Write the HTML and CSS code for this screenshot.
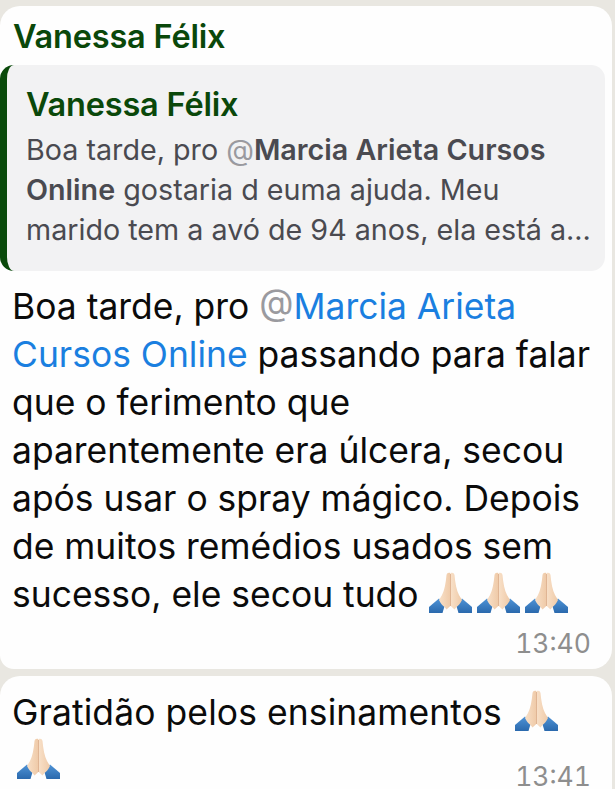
FILE: index.html
```html
<!DOCTYPE html>
<html lang="pt">
<head>
<meta charset="utf-8">
<title>Conversa</title>
<link rel="stylesheet" href="styles.css">
</head>
<body>
<svg class="defs" width="0" height="0" aria-hidden="true">
  <defs>
    <linearGradient id="skin" x1="0" y1="0" x2="1" y2="0">
      <stop offset="0" stop-color="#f8e0c8"/>
      <stop offset="1" stop-color="#efcaa8"/>
    </linearGradient>
    <linearGradient id="sleeve" x1="0" y1="0" x2="0" y2="1">
      <stop offset="0" stop-color="#4f93d6"/>
      <stop offset="1" stop-color="#2a69ad"/>
    </linearGradient>
    <symbol id="pray" viewBox="0 0 43 42">
      <path d="M0 41V35L10 26.500L16 32.500L13.500 41Z" fill="url(#sleeve)"/>
      <path d="M43 41V35L33 26.500L27 32.500L29.500 41Z" fill="url(#sleeve)"/>
      <path d="M21.300 1C19.500 .3 18 .8 17.500 3C16.800 11 15.500 18 13 23L10 28C11.500 31.500 13.500 33.500 15.500 35L17.500 37.500L21.300 34Z" fill="url(#skin)"/>
      <path d="M21.700 1C23.500 .3 25 .8 25.500 3C26.200 11 27.500 18 30 23L33 28C31.500 31.500 29.500 33.500 27.500 35L25.500 37.500L21.700 34Z" fill="url(#skin)"/>
      <path d="M21.500 2V34" stroke="#e0b594" stroke-width="1" fill="none"/>
    </symbol>
  </defs>
</svg>
<main class="chat">
  <article class="bubble bubble-first">
    <h2 class="sender">Vanessa Félix</h2>
    <blockquote class="quote">
      <h3 class="sender quote-sender">Vanessa Félix</h3>
      <p class="quote-text">Boa tarde, pro <span class="at">@</span><strong>Marcia Arieta Cursos<br>Online</strong> gostaria d euma ajuda. Meu<br>marido tem a avó de 94 anos, ela está a...</p>
    </blockquote>
    <p class="message">Boa tarde, pro <span class="at">@</span><span class="mention">Marcia Arieta<br>Cursos Online</span> passando para falar<br>que o ferimento que<br>aparentemente era úlcera, secou<br>após usar o spray mágico. Depois<br>de muitos remédios usados sem<br>sucesso, ele secou tudo <svg class="emoji first-emoji"><use href="#pray"/></svg><svg class="emoji"><use href="#pray"/></svg><svg class="emoji"><use href="#pray"/></svg></p>
    <time class="time">13:40</time>
  </article>
  <article class="bubble bubble-second">
    <p class="message">Gratidão pelos ensinamentos <svg class="emoji first-emoji"><use href="#pray"/></svg><br><svg class="emoji"><use href="#pray"/></svg></p>
    <time class="time time-second">13:41</time>
  </article>
</main>
</body>
</html>
```
FILE: styles.css
```css
* {
  box-sizing: border-box;
}

html,
body {
  margin: 0;
  height: 789px;
  overflow: hidden;
}

body {
  background: #e9e7e1;
  font-family: Inter, "Liberation Sans", sans-serif;
  color: #0b0b0b;
}

.defs {
  display: block;
  height: 0;
}

.chat {
  display: flex;
  flex-direction: column;
  gap: 7px;
  padding-top: 6px;
}

.bubble {
  width: 612px;
  background: #fefefe;
}

.bubble-first {
  height: 663px;
  padding-top: 10px;
  border-radius: 20px 20px 20px 14px;
}

.bubble-second {
  height: 113px;
  padding-top: 13px;
  border-radius: 20px 20px 0 0;
}

.sender {
  margin: 0 0 0 13px;
  font-size: 32.500px;
  line-height: 42px;
  font-weight: 600;
  color: #0a480a;
  letter-spacing: -0.2px;
}

.quote {
  height: 206px;
  margin: 7px 7px 0 0;
  padding: 24px 0 0 19px;
  background: #f2f2f3;
  border-left: 7px solid #0a4a0a;
  border-radius: 14px;
}

.quote-sender {
  margin: 0;
  line-height: 32px;
}

.quote-text {
  margin: 9px 0 0;
  font-size: 28.700px;
  line-height: 40px;
  color: #4a4a50;
  white-space: nowrap;
}

.quote-text strong {
  font-weight: 600;
}

.at {
  color: #9a9a9f;
}

.message {
  margin: 12px 0 0 12px;
  font-size: 35.450px;
  line-height: 48px;
  white-space: nowrap;
}

.bubble-second .message {
  margin-top: 0;
  letter-spacing: 0.1px;
}

.bubble-second .first-emoji {
  margin-left: 3px;
}

.mention {
  color: #1a7fe0;
}

.emoji {
  display: inline-block;
  width: 43px;
  height: 42px;
  margin-left: 5px;
  vertical-align: -7px;
}

.first-emoji {
  margin-left: 0;
}

.time {
  display: block;
  margin: 11px 21px 0 0;
  text-align: right;
  font-size: 26.500px;
  line-height: 26px;
  color: #8e8e8e;
  font-variant-numeric: tabular-nums;
}

.time-second {
  margin-top: -22px;
}
```
